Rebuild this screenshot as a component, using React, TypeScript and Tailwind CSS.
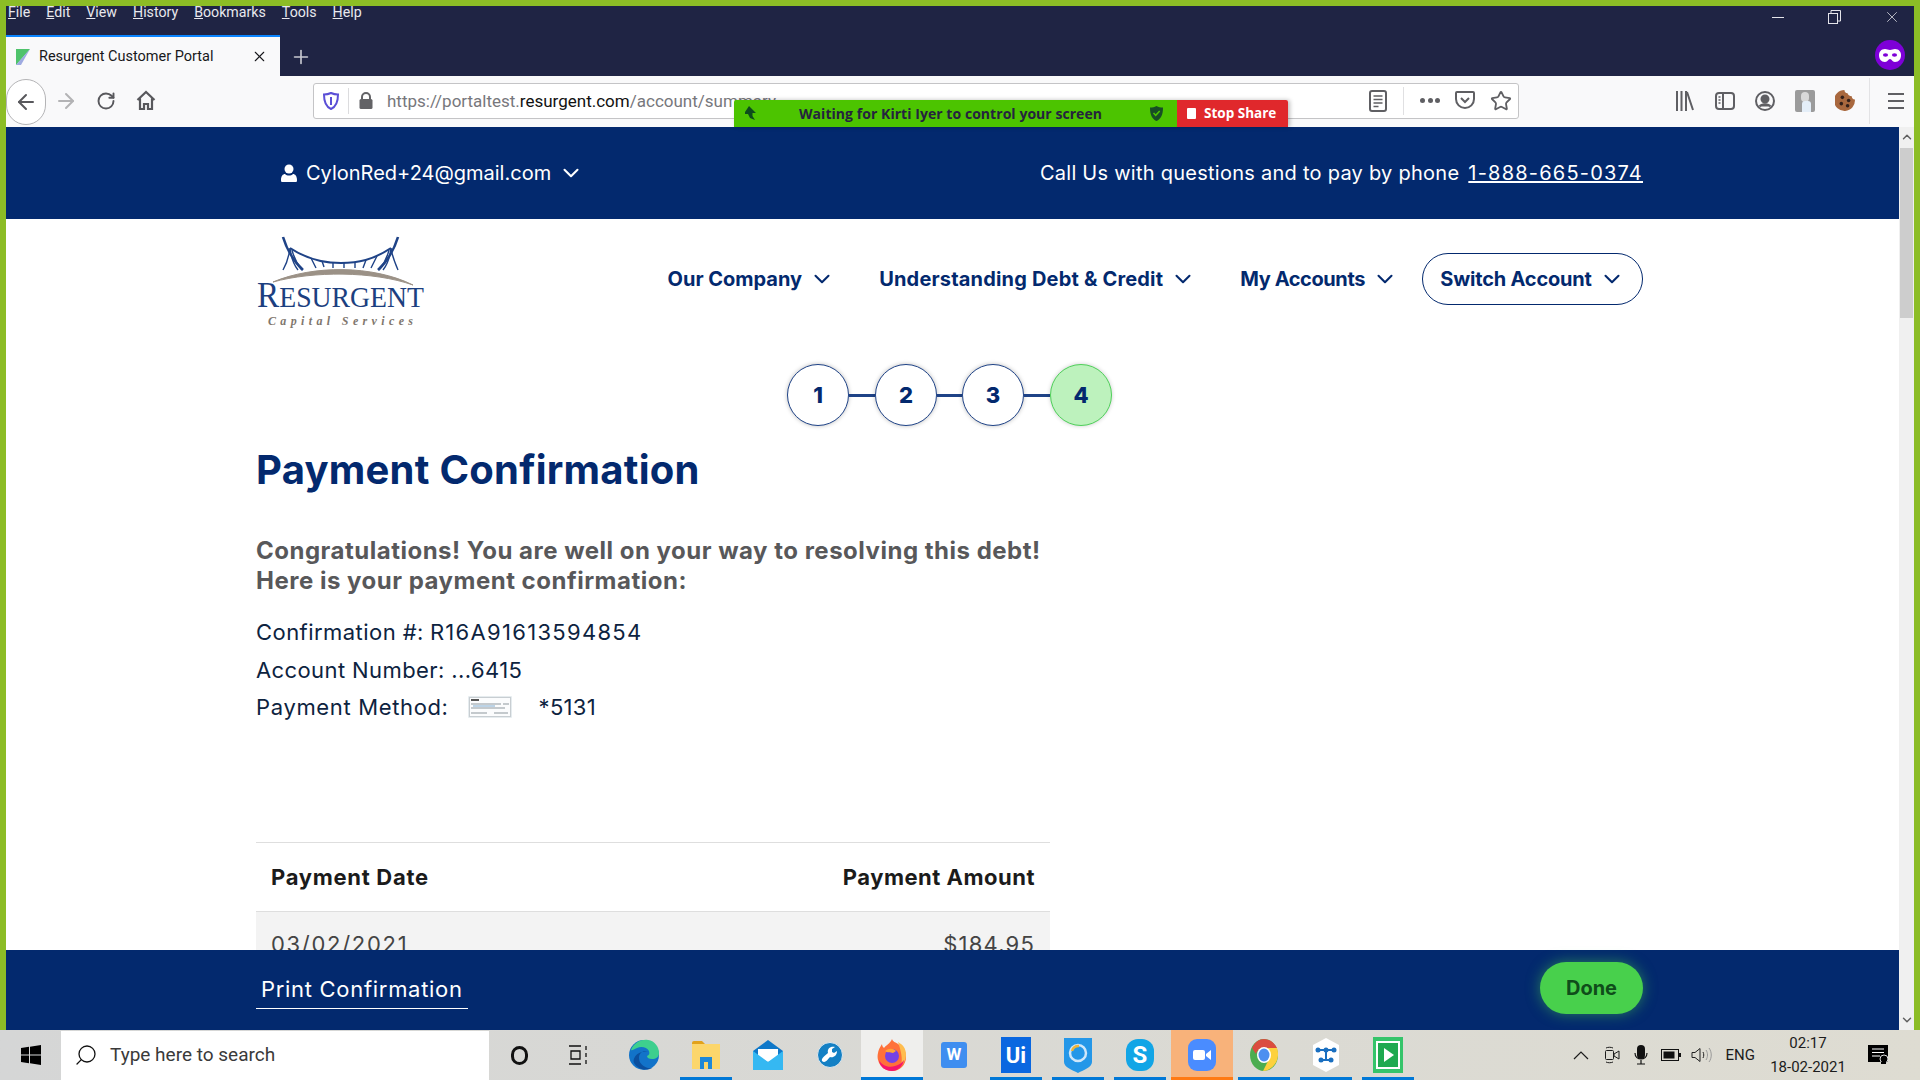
import React from "react";
import { ArrowLeft, ArrowRight, ChevronDown, ChevronUp, Plus, RotateCw, Search, Star, X } from "lucide-react";

const chromeFont = "font-['Roboto',sans-serif]";

const MENU = ["File", "Edit", "View", "History", "Bookmarks", "Tools", "Help"];

function MenuBar() {
  return (
    <div className="flex h-[29px] items-start gap-[16px] pl-[2px] text-[14.2px] leading-[12px] text-[#e8e8ee]">
      {MENU.map((item) => (
        <span key={item}>
          <span className="underline">{item[0]}</span>
          {item.slice(1)}
        </span>
      ))}
    </div>
  );
}

function WindowButtons() {
  return (
    <div className="absolute right-[-6px] top-0 flex h-[22px] items-center text-[#e4e4ea]">
      <div className="flex w-[57px] justify-center">
        <div className="h-px w-[12px] bg-current" />
      </div>
      <div className="flex w-[57px] justify-center">
        <svg width="13" height="14" viewBox="0 0 13 14" fill="none" stroke="currentColor">
          <rect x="0.5" y="3.5" width="9" height="10" />
          <path d="M3 3V.5h9.5V11H10" />
        </svg>
      </div>
      <div className="flex w-[57px] justify-center">
        <X size={18} strokeWidth={1} />
      </div>
    </div>
  );
}

function TabStrip() {
  return (
    <div className={`relative h-[70px] bg-[#1f2444] ${chromeFont}`}>
      <MenuBar />
      <WindowButtons />
      <div className="flex h-[41px] items-end">
        <div className="flex h-[41px] w-[274px] items-center border-t-2 border-[#0a84ff] bg-[#f9f9fa] pl-[9px] pr-[12px] text-[14.5px] text-[#18181b]">
          <svg width="16" height="18" viewBox="0 0 16 18" className="mr-[8px] shrink-0">
            <path d="M1 1h14L1 17z" fill="#4fc36b" />
            <path d="M15 1 6 17l-5 0z" fill="#7f8fd8" opacity="0.75" />
          </svg>
          <span className="flex-1">Resurgent Customer Portal</span>
          <X size={17} strokeWidth={1.5} />
        </div>
        <div className="flex h-[39px] w-[42px] items-center justify-center text-[#c7c8d0]">
          <Plus size={22} strokeWidth={1.8} />
        </div>
        <div className="ml-auto mb-[6px] mr-[9px] flex h-[30px] w-[30px] items-center justify-center rounded-full bg-[#7e00d8]">
          <svg width="22" height="13" viewBox="0 0 22 13">
            <path d="M6 0c2 0 3 1 5 1s3-1 5-1c4 0 6 3 6 6 0 4-2 7-6 7-3 0-3-3-5-3s-2 3-5 3c-4 0-6-3-6-7 0-3 2-6 6-6z" fill="#fff" />
            <ellipse cx="6.5" cy="6" rx="2.6" ry="1.8" fill="#7e00d8" />
            <ellipse cx="15.5" cy="6" rx="2.6" ry="1.8" fill="#7e00d8" />
          </svg>
        </div>
      </div>
    </div>
  );
}

function UrlBar() {
  return (
    <div className="relative flex h-[36px] w-[1206px] items-center rounded-[3px] border border-[#c4c4c6] bg-white pl-[9px] text-[#5a5a60]">
      <svg width="16" height="18" viewBox="0 0 16 18" className="shrink-0">
        <path d="M8 1c2 1 4 1.600 7 1.600C15 10 13 15 8 17 3 15 1 10 1 2.600 4 2.600 6 2 8 1z" fill="#fff" stroke="#5b4fd6" strokeWidth="2" />
        <path d="M8 5v8" stroke="#5b4fd6" strokeWidth="2" />
      </svg>
      <div className="ml-[9px] h-[26px] w-px bg-[#dcdcde]" />
      <svg width="14" height="17" viewBox="0 0 14 17" className="ml-[10px] shrink-0">
        <path d="M3 7V5a4 4 0 0 1 8 0v2" fill="none" stroke="#636366" strokeWidth="2" />
        <rect x="0.500" y="7" width="13" height="10" rx="1.500" fill="#636366" />
      </svg>
      <span className="ml-[14px] mt-[3px] whitespace-nowrap text-[17px] text-[#77777c]">
        https://portaltest.<span className="text-[#111]">resurgent.com</span>/account/summary
      </span>
      <div className="ml-auto flex items-center pr-[6px]">
        <svg width="18" height="22" viewBox="0 0 18 22" fill="none" stroke="#5f5f63" strokeWidth="2">
          <rect x="1" y="1" width="16" height="20" rx="2" />
          <path d="M4.500 6h9M4.500 9.500h9M4.500 13h9M4.500 16.500h5" strokeWidth="1.300" />
        </svg>
        <div className="ml-[16px] mr-[16px] h-[28px] w-px bg-[#e0e0e2]" />
        <div className="flex w-[20px] justify-between">
          <span className="h-[5px] w-[5px] rounded-full bg-[#5f5f63]" />
          <span className="h-[5px] w-[5px] rounded-full bg-[#5f5f63]" />
          <span className="h-[5px] w-[5px] rounded-full bg-[#5f5f63]" />
        </div>
        <svg width="20" height="19" viewBox="0 0 20 19" fill="none" stroke="#5f5f63" strokeWidth="2" className="ml-[15px]">
          <path d="M2 1h16a1 1 0 0 1 1 1v6a9 9 0 0 1-18 0V2a1 1 0 0 1 1-1z" />
          <path d="m6 7 4 4 4-4" />
        </svg>
        <Star size={22} strokeWidth={2} className="ml-[15px] text-[#5f5f63]" />
      </div>
    </div>
  );
}

function Toolbar() {
  return (
    <div className={`relative flex h-[51px] items-center bg-[#f9f9fa] pb-[2px] ${chromeFont}`}>
      <div className="mt-[2px] flex h-[46px] w-[40px] items-center justify-center rounded-full border border-[#b4b4b6] bg-white text-[#58585c]">
        <ArrowLeft size={24} strokeWidth={2} />
      </div>
      <div className="flex w-[40px] justify-center text-[#b3b3b5]">
        <ArrowRight size={24} strokeWidth={2} />
      </div>
      <div className="flex w-[40px] justify-center text-[#58585c]">
        <RotateCw size={20} strokeWidth={2.300} />
      </div>
      <div className="flex w-[40px] justify-center text-[#58585c]">
        <svg width="20" height="21" viewBox="0 0 20 21" fill="none" stroke="currentColor" strokeWidth="2.200">
          <path d="M1.500 10 10 2l8.500 8M4 8.500V19h4v-5h4v5h4V8.500" />
        </svg>
      </div>
      <div className="ml-[147px]">
        <UrlBar />
      </div>
      <div className="ml-auto flex h-[36px] items-center pr-[10px] text-[#5f5f63]">
        <svg width="19" height="20" viewBox="0 0 19 20" fill="none" stroke="currentColor" strokeWidth="2">
          <path d="M2 0v20M6.500 0v20M11 0v20M12 1l6 18" />
        </svg>
        <svg width="20" height="18" viewBox="0 0 20 18" fill="none" stroke="currentColor" strokeWidth="2" className="ml-[21px]">
          <rect x="1" y="1" width="18" height="16" rx="3" />
          <path d="M8 1v16" />
          <path d="M3.500 5h2M3.500 8h2M3.500 11h2" strokeWidth="1.300" />
        </svg>
        <svg width="20" height="20" viewBox="0 0 20 20" fill="none" stroke="currentColor" strokeWidth="2" className="ml-[20px]">
          <circle cx="10" cy="10" r="9" />
          <circle cx="10" cy="8" r="3.500" fill="currentColor" />
          <path d="M4.500 15.500c2-3 9-3 11 0" fill="currentColor" />
        </svg>
        <div className="relative ml-[20px] h-[22px] w-[20px] rounded-[2px] bg-[#9b9b9b]">
          <div className="absolute left-[6px] top-[2px] h-[10px] w-[8px] rounded-full bg-[#d8d8d8]" />
          <div className="absolute bottom-0 left-[7px] h-[11px] w-[9px] rounded-t-[3px] bg-[#e4eef8]" />
        </div>
        <svg width="21" height="23" viewBox="0 0 20 22" className="ml-[20px]">
          <path d="M9 1a10 10 0 1 0 10 9c-2 0-3-1-3-3-2 0-4-2-4-3-2 0-3-1-3-3z" fill="#a9683e" />
          <circle cx="7" cy="8" r="1.700" fill="#33201a" />
          <circle cx="13" cy="11" r="1.700" fill="#33201a" />
          <circle cx="6" cy="14" r="1.700" fill="#33201a" />
          <circle cx="12" cy="16" r="1.700" fill="#33201a" />
        </svg>
        <div className="ml-[13px] mr-[18px] h-[46px] w-px bg-[#e3e3e5]" />
        <div className="flex h-[16px] w-[16px] flex-col justify-between">
          <div className="h-[2px] bg-current" />
          <div className="h-[2px] bg-current" />
          <div className="h-[2px] bg-current" />
        </div>
      </div>
      <ShareBar />
    </div>
  );
}

function ShareBar() {
  return (
    <div className="absolute bottom-0 left-[728px] flex h-[27px] w-[554px] overflow-hidden rounded-t-[2px] font-['Open_Sans',sans-serif] text-[14px] font-bold shadow-[2px_0_4px_rgba(0,0,0,0.25)]">
      <div className="flex w-[443px] items-center bg-[#4cc400] pl-[9px] text-[#25233f]">
        <svg width="13" height="15" viewBox="0 0 13 15" className="shrink-0">
          <path d="M6 0 13 7H9.500v3L12 14l-5-2-2-4H2V6z" fill="#0d4d1c" />
        </svg>
        <span className="ml-[43px] w-[351px] whitespace-nowrap tracking-[0.05px]">Waiting for Kirti Iyer to control your screen</span>
        <svg width="13" height="15" viewBox="0 0 13 15" className="shrink-0">
          <path d="M6.500 0c2 1 4 1.500 6.500 1.500C13 9 11 13 6.500 15 2 13 0 9 0 1.500 2.500 1.500 4.500 1 6.500 0z" fill="#174d25" />
          <path d="m3.500 7 2.200 2.300L9.700 5" fill="none" stroke="#4cc400" strokeWidth="1.500" />
        </svg>
      </div>
      <div className="flex flex-1 items-center bg-[#e0282c] pl-[10px] text-[#fff]">
        <div className="h-[11px] w-[9px] rounded-[1px] bg-white" />
        <span className="ml-[8px] whitespace-nowrap text-[13.500px]">Stop Share</span>
      </div>
    </div>
  );
}

function Logo() {
  return (
    <svg width="170" height="93" viewBox="0 0 170 93" className="shrink-0">
      <g fill="none" stroke="#1f4387" strokeWidth="1.400">
        <path d="M27 2c3 10 10 24 20 33M142 2c-3 10-10 24-20 33" strokeWidth="2.600" />
        <path d="M34 13c-1 8-3 15-7 22M142 35c-3-7-6-14-7-22M34 13c1 8 3 16 8 22M135 13c-1 8-3 16-8 22M36 15c2 8 5 14 10 20M133 15c-2 8-5 14-10 20" />
        <path d="M34 13c18 12 34 15 51 15s32-3 50-15" strokeWidth="2" />
        <path d="M55 23l5 10M66 26l2 6M77 27v6M88 28v5M99 27v6M110 25l-3 8M121 21l-6 12" />
      </g>
      <path d="M17 47c40-17 100-17 140 3-40-14-100-14-140-3z" fill="#9b9186" stroke="#9b9186" />
      <text x="1" y="72" textLength="167" lengthAdjust="spacingAndGlyphs" fill="#1c3f80" className="font-['Liberation_Serif',serif]" fontSize="30">
        <tspan fontSize="36">R</tspan>ESURGENT
      </text>
      <text x="12" y="90" textLength="145" fill="#7f776e" fontStyle="italic" fontWeight="700" className="font-['Liberation_Serif',serif]" fontSize="12">
        Capital Services
      </text>
    </svg>
  );
}

function NavItem({ label, className }: { label: string; className?: string }) {
  return (
    <span className="flex items-center gap-[7px]">
      <span className={className}>{label}</span>
      <ChevronDown size={26} strokeWidth={1.900} />
    </span>
  );
}

const STEPS = [
  { n: "1", line: "w-[26px]" },
  { n: "2", line: "w-[25px]" },
  { n: "3", line: "w-[26px]" },
];

function Steps() {
  return (
    <div className="ml-[531px] mt-[36px] flex items-center text-[22px] font-extrabold text-[#03296e]">
      {STEPS.map((step) => (
        <React.Fragment key={step.n}>
          <div className="flex h-[62px] w-[62px] items-center justify-center rounded-full border border-[#1f4387] bg-white shadow-[0_0_4px_rgba(0,0,0,0.25)]">
            {step.n}
          </div>
          <div className={`h-[3px] bg-[#1f4387] ${step.line}`} />
        </React.Fragment>
      ))}
      <div className="flex h-[62px] w-[62px] items-center justify-center rounded-full border border-[#4fd05a] bg-[#bdf2bd] shadow-[0_0_4px_rgba(0,0,0,0.2)]">
        4
      </div>
    </div>
  );
}

function CheckImage() {
  return (
    <svg width="44" height="22" viewBox="0 0 44 22" className="shrink-0">
      <rect width="44" height="22" rx="1" fill="#e6ecef" />
      <rect x="1.500" y="1.500" width="41" height="19" fill="#fbfcfd" stroke="#c8ced2" />
      <path d="M3 3h8v2H3z" fill="#555" />
      <path d="M3 8h30M35 8h6M3 12h34M3 17h16M26 17h14" stroke="#8d979d" strokeWidth="1" />
      <path d="M5 10h22" stroke="#bcd3e6" strokeWidth="2" />
    </svg>
  );
}

function PageContent() {
  return (
    <div className="flex min-h-0 flex-1 flex-col overflow-hidden bg-white pl-[250px] pr-[256px]">
      <div className="flex items-start justify-between pt-[16px]">
        <Logo />
        <nav className="mt-[18px] flex items-center text-[20px] font-bold text-[#03296e]">
          <NavItem label="Our Company" />
          <span className="w-[44px]" />
          <NavItem label="Understanding Debt & Credit" className="tracking-[0.18px]" />
          <span className="w-[44px]" />
          <NavItem label="My Accounts" className="tracking-[-0.4px]" />
          <div className="ml-[24px] flex h-[52px] w-[221px] items-center justify-center rounded-full border border-[#03296e]">
            <NavItem label="Switch Account" className="tracking-[-0.2px]" />
          </div>
        </nav>
      </div>
      <Steps />
      <h1 className="mt-[22px] text-[40px] font-bold leading-[44px] tracking-[0.25px] text-[#03296e]">Payment Confirmation</h1>
      <p className="mt-[44px] text-[24px] font-bold leading-[30px] tracking-[0.5px] text-[#58585a]">
        Congratulations! You are well on your way to resolving this debt!
        <br />
        Here is your payment confirmation:
      </p>
      <div className="mt-[17px] text-[22px] leading-[38px] text-[#0d2340]">
        <div>
          <span className="tracking-[0.45px]">Confirmation #:</span>
          <span className="ml-[6px] tracking-[1.3px]">R16A91613594854</span>
        </div>
        <div className="tracking-[0.4px]">Account Number: ...6415</div>
        <div className="-mt-px flex items-center">
          <span className="tracking-[0.65px]">Payment Method:</span>
          <span className="ml-[19px]"><CheckImage /></span>
          <span className="ml-[27px] tracking-[0.3px]">*5131</span>
        </div>
      </div>
      <div className="mt-[116px] w-[794px] shrink-0 text-[22px]">
        <div className="flex h-[70px] items-center justify-between border-y border-[#dedede] px-[15px] font-bold text-[#1b1b1b]">
          <span className="tracking-[0.7px]">Payment Date</span>
          <span className="tracking-[0.5px]">Payment Amount</span>
        </div>
        <div className="flex h-[60px] items-center justify-between bg-[#f3f3f3] px-[15px] pt-[4px] text-[#444]">
          <span className="tracking-[1.7px]">03/02/2021</span>
          <span className="tracking-[1.2px]">$184.95</span>
        </div>
      </div>
    </div>
  );
}

function TopBar() {
  return (
    <div className="flex h-[92px] shrink-0 items-center justify-between bg-[#03296e] pl-[275px] pr-[256px] text-[20px] text-white">
      <div className="flex items-center">
        <svg width="16" height="18" viewBox="0 0 16 18" fill="#fff">
          <circle cx="8" cy="5" r="4.500" />
          <path d="M1 18c-1 0-1-1-1-2 0-4 2-6 4-6 1 1 2.500 1.500 4 1.500S11 11 12 10c2 0 4 2 4 6 0 1 0 2-1 2z" />
        </svg>
        <span className="ml-[9px]">CylonRed+24@gmail.com</span>
        <ChevronDown size={26} strokeWidth={1.900} className="ml-[7px]" />
      </div>
      <div className="flex items-center gap-[9px]">
        <span className="tracking-[0.26px]">Call Us with questions and to pay by phone</span>
        <span className="underline tracking-[1.2px]">1-888-665-0374</span>
      </div>
    </div>
  );
}

function FooterBar() {
  return (
    <div className="flex h-[80px] shrink-0 items-center justify-between bg-[#03296e] pb-[4px] pl-[250px] pr-[256px] text-white">
      <div className="mt-[2px] border-b border-white px-[5px] pb-[4px] pt-[4px] text-[22px] leading-[30px] tracking-[0.7px]">Print Confirmation</div>
      <div className="flex h-[52px] w-[103px] items-center justify-center rounded-full bg-[#48d04c] text-[20px] font-bold text-[#0f4d1a] shadow-[0_0_14px_rgba(72,208,76,0.5)]">
        Done
      </div>
    </div>
  );
}

function Scrollbar() {
  return (
    <div className="flex w-[15px] shrink-0 flex-col items-center justify-between bg-[#f0f0f0] py-[3px] text-[#606060]">
      <div className="flex w-full flex-col items-center">
        <ChevronUp size={14} strokeWidth={2.500} />
        <div className="mt-[4px] h-[170px] w-[13px] bg-[#cdcdcd]" />
      </div>
      <ChevronDown size={14} strokeWidth={2.500} />
    </div>
  );
}

function EdgeIcon() {
  return (
    <svg width="32" height="32" viewBox="0 0 32 32">
      <circle cx="16" cy="16" r="15" fill="#1273c9" />
      <path d="M3 11C6 3 14 0 20 1c7 1 11 7 11 13 0 4-3 6-7 6-3 0-5-1-5-3 2-1 3-2 2-5-2-4-8-5-12-3-3 1-5 3-6 2z" fill="#3ecf8e" />
      <path d="M20 13c-4-2-9 0-9 6 0 6 6 11 13 10-5 3-14 2-18-5-2-4 3-13 14-11z" fill="#0b4f9e" />
    </svg>
  );
}

function FolderIcon() {
  return (
    <svg width="30" height="28" viewBox="0 0 30 28">
      <path d="M1 2a2 2 0 0 1 2-2h8l3 3h-13z" fill="#e2a21b" />
      <rect x="1" y="3" width="28" height="25" fill="#fcd66b" />
      <path d="M9 28V16h12v12h-4v-7h-4v7z" fill="#1e88d8" />
    </svg>
  );
}

function MailIcon() {
  return (
    <svg width="30" height="30" viewBox="0 0 30 30">
      <path d="M0 11 15 0l15 11v19H0z" fill="#0f78c9" />
      <path d="M5 9h20v9L15 22 5 18z" fill="#fff" />
      <path d="M0 11 15 22l15-11v19H0z" fill="#35b8f2" />
    </svg>
  );
}

function WrenchIcon() {
  return (
    <svg width="26" height="26" viewBox="0 0 26 26">
      <circle cx="13" cy="13" r="12.500" fill="#1480c4" stroke="#dfe8ee" strokeWidth="1" />
      <path d="M5 19c3 3 5-1 8-4 3 1 7-1 7-6l-3 2-2-1V7l3-2c-5-1-8 2-7 6-3 3-7 5-6 8z" fill="#fff" />
    </svg>
  );
}

function FirefoxIcon() {
  return (
    <svg width="30" height="34" viewBox="0 0 30 34">
      <path d="M15 33A14.500 14.500 0 0 1 1 15c1-5 3-7 4-9 0 2 1 3 2 4 2-3 6-4 8-9 1 3 3 3 6 5 5 3 8 6 8 13 0 8-6 14-14 14z" fill="#ff7139" />
      <path d="M21 4c5 3 8 6 8 13 0 4-2 8-5 11 2-7 0-15-3-24z" fill="#ffbd4f" />
      <path d="M15 33C8 33 3 29 2 22c3 6 10 8 16 6 4-1 7-3 9-6-1 6-6 11-12 11z" fill="#f5156c" />
      <circle cx="15" cy="18" r="7" fill="#7542e5" />
      <path d="M8 13c4-3 8-3 11 0l-3 2c-3-1-6 0-8-2z" fill="#ffa436" />
    </svg>
  );
}

function ZoomIcon() {
  return (
    <svg width="28" height="32" viewBox="0 0 28 32">
      <rect width="28" height="32" rx="9" fill="#4a8cff" />
      <rect x="5" y="11" width="12" height="10" rx="2" fill="#fff" />
      <path d="m18 15 5-4v10l-5-4z" fill="#fff" />
    </svg>
  );
}

function ChromeIcon() {
  return (
    <svg width="28" height="32" viewBox="0 0 28 32">
      <ellipse cx="14" cy="16" rx="14" ry="16" fill="#4cad50" />
      <path d="M2 9C5 3 9 0 14 0c5 0 10 3 13 9H14c-4 0-7 2-8 6z" fill="#db4c3f" />
      <path d="M27 9c2 6 1 12-2 16-3 4-7 7-12 7l6-12c1-3 1-8-2-11z" fill="#fdd13d" />
      <ellipse cx="14" cy="16" rx="7" ry="8" fill="#fff" />
      <ellipse cx="14" cy="16" rx="5.500" ry="6.500" fill="#4d8ff0" />
    </svg>
  );
}

function HexIcon() {
  return (
    <svg width="28" height="34" viewBox="0 0 28 34">
      <path d="M14 0 27 7v20l-13 7-13-7V7z" fill="#fff" />
      <path d="M6 12h16M14 12v10M9 22h10" stroke="#1a6fc0" strokeWidth="2" />
      <circle cx="6" cy="12" r="2.500" fill="#1a6fc0" />
      <circle cx="14" cy="12" r="2.500" fill="#1a6fc0" />
      <circle cx="22" cy="12" r="2.500" fill="#1a6fc0" />
      <circle cx="9" cy="22" r="2.500" fill="#1a6fc0" />
      <circle cx="19" cy="22" r="2.500" fill="#1a6fc0" />
    </svg>
  );
}

type TaskItem = { key: string; icon: React.ReactNode; bar?: boolean; active?: boolean; zoom?: boolean };

const TASK_ITEMS: TaskItem[] = [
  { key: "edge", icon: <EdgeIcon /> },
  { key: "files", icon: <FolderIcon />, bar: true },
  { key: "mail", icon: <MailIcon /> },
  { key: "wrench", icon: <WrenchIcon /> },
  { key: "firefox", icon: <FirefoxIcon />, active: true },
  {
    key: "wps",
    icon: (
      <div className="flex h-[26px] w-[26px] items-center justify-center rounded-[3px] bg-[#3f8ef0] text-[17px] font-bold text-white">W</div>
    ),
  },
  {
    key: "uipath",
    icon: (
      <div className="flex h-[36px] w-[30px] items-center justify-center bg-[#0a67e0] text-[22px] font-bold text-white">Ui</div>
    ),
    bar: true,
  },
  {
    key: "shield",
    icon: (
      <svg width="28" height="35" viewBox="0 0 28 35">
        <path d="M0 0h28v24c0 5-8 8-14 11C8 32 0 29 0 24z" fill="#2497e8" />
        <circle cx="14" cy="15" r="8" fill="none" stroke="#cfe7fa" strokeWidth="2.500" />
        <path d="M8 13a7 7 0 0 1 7-5" fill="none" stroke="#f0b53a" strokeWidth="2.500" />
      </svg>
    ),
    bar: true,
  },
  {
    key: "skype",
    icon: (
      <div className="flex h-[32px] w-[28px] items-center justify-center rounded-[12px] bg-[#12a5e6] text-[24px] font-bold text-white">S</div>
    ),
    bar: true,
  },
  { key: "zoom", icon: <ZoomIcon />, zoom: true },
  { key: "chrome", icon: <ChromeIcon />, bar: true },
  { key: "hex", icon: <HexIcon />, bar: true },
  {
    key: "player",
    icon: (
      <svg width="30" height="36" viewBox="0 0 30 36">
        <rect width="30" height="36" fill="#35c46a" />
        <rect x="3" y="4" width="24" height="28" fill="#fff" />
        <rect x="5" y="6" width="20" height="24" fill="#1fa950" />
        <path d="m11 11 10 7-10 7z" fill="#fff" />
      </svg>
    ),
    bar: true,
  },
];

function TaskButton({ item }: { item: TaskItem }) {
  const bg = item.active ? "bg-[#efefed]" : item.zoom ? "bg-[#f8b27a]" : "";
  return (
    <div className={`relative flex h-[50px] w-[62px] items-center justify-center ${bg}`}>
      {item.icon}
      {item.active && <div className="absolute inset-x-0 bottom-0 h-[3px] bg-[#0078d7]" />}
      {item.zoom && <div className="absolute inset-x-0 bottom-0 h-[3px] bg-[#ff7a14]" />}
      {item.bar && <div className="absolute inset-x-[5px] bottom-0 h-[3px] bg-[#0078d7]" />}
    </div>
  );
}

function Tray() {
  return (
    <div className="ml-auto flex h-full items-center text-[#1c1c1c]">
      <svg width="16" height="10" viewBox="0 0 16 10" fill="none" stroke="currentColor" strokeWidth="1.200">
        <path d="m1 9 7-7 7 7" />
      </svg>
      <svg width="16" height="18" viewBox="0 0 16 18" fill="none" stroke="currentColor" className="ml-[15px]">
        <rect x="1.500" y="4.500" width="8" height="9" rx="1" />
        <path d="m10 8 5-3v8l-5-3zM2 2c2-1 5-1 7 0M2 16c2 1 5 1 7 0" />
      </svg>
      <svg width="14" height="20" viewBox="0 0 14 20" className="ml-[14px]">
        <rect x="3" y="0" width="8" height="14" rx="4" fill="#111" />
        <path d="M1 8c0 8 12 8 12 0M7 15v4M3 19h8" fill="none" stroke="#111" strokeWidth="1.200" />
      </svg>
      <svg width="20" height="12" viewBox="0 0 20 12" className="ml-[13px]">
        <rect x="0.500" y="0.500" width="17" height="11" fill="none" stroke="#111" />
        <rect x="2.500" y="2.500" width="11" height="7" fill="#111" />
        <rect x="18" y="4" width="2" height="4" fill="#111" />
      </svg>
      <svg width="22" height="16" viewBox="0 0 22 16" fill="none" stroke="#222" className="ml-[10px]">
        <path d="M1 5.500h3L9 1.500v13l-5-4H1z" />
        <path d="M12 5c1 2 1 4 0 6" />
        <path d="M15 3c2 3 2 7 0 10M18 1c3 4 3 10 0 14" stroke="#999" />
      </svg>
      <span className={`ml-[13px] text-[15px] ${chromeFont}`}>ENG</span>
      <div className={`ml-[15px] flex w-[76px] flex-col items-center text-[15px] leading-[24px] ${chromeFont}`}>
        <span>02:17</span>
        <span>18-02-2021</span>
      </div>
      <svg width="22" height="20" viewBox="0 0 22 20" className="ml-[22px] mr-[30px]">
        <rect width="20" height="17" fill="#000" />
        <path d="M4 4h12M4 7.500h12M4 11h8" stroke="#fff" />
        <circle cx="16" cy="14" r="4" fill="#000" stroke="#ddd" />
        <path d="M13 18h5" stroke="#000" strokeWidth="2" />
      </svg>
    </div>
  );
}

function Taskbar() {
  return (
    <div className={`flex h-[50px] shrink-0 items-center bg-linear-to-r from-[#d5d6d6] to-[#dedcd2] ${chromeFont}`}>
      <div className="flex w-[61px] justify-center">
        <svg width="20" height="20" viewBox="0 0 20 20" fill="#000">
          <path d="M0 3l8-1.200V9.500H0zM9 1.700 20 0v9.500H9zM0 10.500h8v7.700L0 17zM9 10.500h11V20L9 18.300z" />
        </svg>
      </div>
      <div className="flex h-[49px] w-[428px] items-center bg-white pl-[13px] text-[19px] text-[#3a3a3a]">
        <Search size={24} strokeWidth={1.300} className="-scale-x-100 text-[#111]" />
        <span className="ml-[12px]">Type here to search</span>
      </div>
      <div className="flex w-[60px] justify-center">
        <div className="h-[19px] w-[17px] rounded-full border-[3px] border-[#111]" />
      </div>
      <div className="flex w-[60px] justify-center">
        <svg width="20" height="20" viewBox="0 0 20 20" fill="none" stroke="#111" strokeWidth="1.300">
          <path d="M0 1h12M0 19h12M2 6h9v8H2zM17 1v4M17 8v4M17 15v4" />
        </svg>
      </div>
      <div className="ml-[4px] flex">
        {TASK_ITEMS.map((item) => (
          <TaskButton key={item.key} item={item} />
        ))}
      </div>
      <Tray />
    </div>
  );
}

export default function App() {
  return (
    <div className="flex h-[1080px] w-[1920px] flex-col overflow-hidden font-['Inter',sans-serif]">
      <div className="flex min-h-0 flex-1 flex-col bg-[#8cbd26] pl-[6px] pr-[6px] pt-[6px]">
        <TabStrip />
        <Toolbar />
        <div className="flex min-h-0 flex-1">
          <div className="flex min-w-0 flex-1 flex-col">
            <TopBar />
            <PageContent />
            <FooterBar />
          </div>
          <Scrollbar />
        </div>
      </div>
      <Taskbar />
    </div>
  );
}
